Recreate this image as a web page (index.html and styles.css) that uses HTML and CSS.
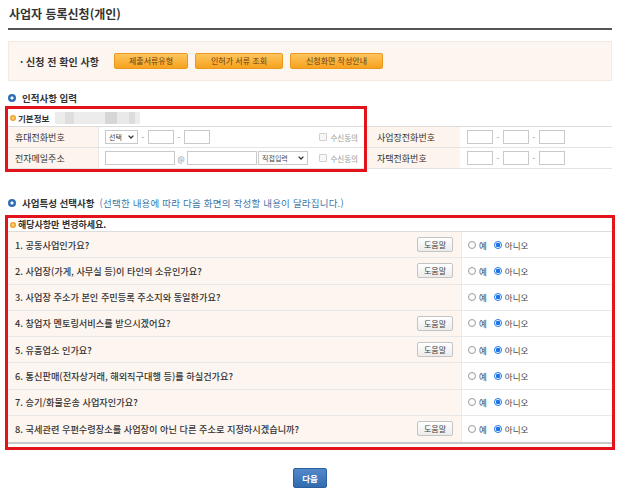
FILE: index.html
```html
<!DOCTYPE html>
<html lang="ko">
<head>
<meta charset="utf-8">
<title>사업자 등록신청(개인)</title>
<link rel="stylesheet" href="styles.css">
</head>
<body>
<div class="page">
  <h1 class="title">사업자 등록신청(개인)</h1>

  <div class="notice">
    <span class="notice-label">· 신청 전 확인 사항</span>
    <button class="btn-orange w1">제출서류유형</button>
    <button class="btn-orange w2">인허가 서류 조회</button>
    <button class="btn-orange w3">신청화면 작성안내</button>
  </div>

  <h2 class="sec-head"><span class="bullet"></span>인적사항 입력</h2>

  <div class="basic">
    <div class="sub-head"><span class="dot"></span>기본정보<span class="redact"></span></div>
    <div class="info-grid">
      <div class="lbl">휴대전화번호</div>
      <div class="fld">
        <div class="sel s-sm"><span>선택</span><svg width="6" height="4" viewBox="0 0 6 4"><path d="M0.6 0.6 L3 3 L5.4 0.6" fill="none" stroke="#333" stroke-width="1.3"/></svg></div>
        <span class="dash">-</span><input class="tx" type="text"><span class="dash">-</span><input class="tx" type="text">
        <span class="agree"><span class="cb"></span>수신동의</span>
      </div>
      <div class="lbl lbl-r">사업장전화번호</div>
      <div class="fld fld-r">
        <input class="tx" type="text"><span class="dash">-</span><input class="tx" type="text"><span class="dash">-</span><input class="tx" type="text">
      </div>

      <div class="lbl">전자메일주소</div>
      <div class="fld">
        <input class="tx tx-wide" type="text"><span class="at">@</span><input class="tx tx-wide" type="text">
        <div class="sel s-lg"><span>직접입력</span><svg width="6" height="4" viewBox="0 0 6 4"><path d="M0.6 0.6 L3 3 L5.4 0.6" fill="none" stroke="#333" stroke-width="1.3"/></svg></div>
        <span class="agree"><span class="cb"></span>수신동의</span>
      </div>
      <div class="lbl lbl-r">자택전화번호</div>
      <div class="fld fld-r">
        <input class="tx" type="text"><span class="dash">-</span><input class="tx" type="text"><span class="dash">-</span><input class="tx" type="text">
      </div>
    </div>
    <div class="mark"></div>
  </div>

  <h2 class="sec-head sec-2"><span class="bullet"></span>사업특성 선택사항<span class="note">(선택한 내용에 따라 다음 화면의 작성할 내용이 달라집니다.)</span></h2>

  <div class="qbox">
    <div class="sub-head sub-q"><span class="dot"></span>해당사항만 변경하세요.</div>
    <div class="qtable">
      <div class="qrow">
        <div class="qcell"><span>1. 공동사업인가요?</span><button class="help">도움말</button></div>
        <div class="acell"><label class="opt"><input type="radio" name="q1">예</label><label class="opt"><input type="radio" name="q1" checked>아니오</label></div>
      </div>
      <div class="qrow">
        <div class="qcell"><span>2. 사업장(가게, 사무실 등)이 타인의 소유인가요?</span><button class="help">도움말</button></div>
        <div class="acell"><label class="opt"><input type="radio" name="q2">예</label><label class="opt"><input type="radio" name="q2" checked>아니오</label></div>
      </div>
      <div class="qrow">
        <div class="qcell"><span>3. 사업장 주소가 본인 주민등록 주소지와 동일한가요?</span></div>
        <div class="acell"><label class="opt"><input type="radio" name="q3">예</label><label class="opt"><input type="radio" name="q3" checked>아니오</label></div>
      </div>
      <div class="qrow">
        <div class="qcell"><span>4. 창업자 멘토링서비스를 받으시겠어요?</span><button class="help">도움말</button></div>
        <div class="acell"><label class="opt"><input type="radio" name="q4">예</label><label class="opt"><input type="radio" name="q4" checked>아니오</label></div>
      </div>
      <div class="qrow">
        <div class="qcell"><span>5. 유흥업소 인가요?</span><button class="help">도움말</button></div>
        <div class="acell"><label class="opt"><input type="radio" name="q5">예</label><label class="opt"><input type="radio" name="q5" checked>아니오</label></div>
      </div>
      <div class="qrow">
        <div class="qcell"><span>6. 통신판매(전자상거래, 해외직구대행 등)를 하실건가요?</span></div>
        <div class="acell"><label class="opt"><input type="radio" name="q6">예</label><label class="opt"><input type="radio" name="q6" checked>아니오</label></div>
      </div>
      <div class="qrow">
        <div class="qcell"><span>7. 승기/화물운송 사업자인가요?</span></div>
        <div class="acell"><label class="opt"><input type="radio" name="q7">예</label><label class="opt"><input type="radio" name="q7" checked>아니오</label></div>
      </div>
      <div class="qrow">
        <div class="qcell"><span>8. 국세관련 우편수령장소를 사업장이 아닌 다른 주소로 지정하시겠습니까?</span><button class="help">도움말</button></div>
        <div class="acell"><label class="opt"><input type="radio" name="q8">예</label><label class="opt"><input type="radio" name="q8" checked>아니오</label></div>
      </div>
    </div>
  </div>

  <div class="actions"><button class="btn-next">다음</button></div>
</div>
</body>
</html>
```

FILE: styles.css
```css
* { box-sizing: border-box; }

body {
  margin: 0;
  background: #fff;
  font-family: "Noto Sans CJK KR", "Noto Sans", sans-serif;
  color: #333;
}

.page {
  width: 622px;
  padding: 0 10px 0 8px;
}

.title {
  margin: 0;
  padding: 6px 0 6px 1px;
  font-size: 12px;
  line-height: 16px;
  font-weight: 700;
  color: #333;
  border-bottom: 2px solid #555;
}

.notice {
  margin-top: 11px;
  height: 40px;
  background: #fdf6f0;
  border: 1px solid #f3e9df;
  display: flex;
  align-items: center;
  padding-left: 11px;
}

.notice-label {
  flex: none;
  width: 94px;
  font-size: 10px;
  font-weight: 700;
  color: #333;
}

.btn-orange {
  flex: none;
  height: 16px;
  padding: 0;
  margin-right: 7px;
  font-family: inherit;
  font-size: 8px;
  line-height: 14px;
  color: #6a3c12;
  border: 1px solid #ea981f;
  border-radius: 2px;
  background: linear-gradient(#fdc55e, #f7a21d);
}
.w1 { width: 74px; }
.w2 { width: 88px; }
.w3 { width: 93px; }

.sec-head {
  margin: 10px 0 0;
  display: flex;
  align-items: center;
  font-size: 9.5px;
  line-height: 14px;
  font-weight: 700;
  color: #333;
}
.sec-2 { margin-top: 27px; }

.bullet {
  flex: none;
  width: 8px;
  height: 8px;
  margin-right: 6px;
  border-radius: 50%;
  background: radial-gradient(circle, #fff 0 1.3px, #2f6eb5 1.8px);
}

.note {
  margin-left: 5px;
  font-weight: 400;
  color: #3a76a6;
  letter-spacing: 0.2px;
}

.basic {
  position: relative;
  margin-top: 4px;
}

.sub-head {
  height: 17px;
  display: flex;
  align-items: center;
  padding-left: 2px;
  font-size: 8.5px;
  font-weight: 700;
  color: #333;
}

.dot {
  flex: none;
  width: 6px;
  height: 6px;
  margin-right: 2px;
  border-radius: 50%;
  background: radial-gradient(circle, #fbd07d 0 1px, #f0a02a 2px);
}

.redact {
  width: 85px;
  height: 12px;
  margin-left: 6px;
  background: linear-gradient(90deg,
    #ececec 0 10px, #dedede 10px 19px, #ececec 19px 50px,
    #d6d6d6 50px 62px, #e9e9e9 62px 74px, #dcdcdc 74px 80px, #ececec 80px);
}

.info-grid {
  display: grid;
  grid-template-columns: 90px 269px 93px 1fr;
  border-top: 1px solid #dcdcdc;
}

.lbl, .fld {
  height: 21px;
  display: flex;
  align-items: center;
  border-bottom: 1px solid #e3e3e3;
}

.lbl {
  background: #fcf4ed;
  padding-left: 7px;
  font-size: 9px;
  color: #333;
}
.lbl-r { padding-left: 10px; }

.fld {
  padding-left: 6px;
  border-left: 1px solid #e8e8e8;
}
.fld-r {
  padding-left: 7px;
  border-left: none;
}

.tx {
  width: 26px;
  height: 14px;
  padding: 0;
  border: 1px solid #c9c9c9;
  background: #fff;
  flex: none;
}
.tx-wide { width: 70px; }

.dash {
  flex: none;
  width: 10px;
  text-align: center;
  font-size: 8px;
  color: #888;
}

.at {
  flex: none;
  width: 12px;
  text-align: center;
  font-size: 7.5px;
  color: #888;
}

.sel {
  flex: none;
  height: 14px;
  border: 1px solid #c9c9c9;
  background: #fff;
  display: flex;
  align-items: center;
  justify-content: space-between;
  padding: 0 3px 0 3px;
  font-size: 7px;
  color: #444;
}
.s-sm { width: 33px; }
.s-lg { width: 50px; margin-left: 1px; }

.agree {
  margin-left: auto;
  padding-right: 9px;
  display: flex;
  align-items: center;
  font-size: 7.5px;
  color: #999;
}

.cb {
  width: 8px;
  height: 8px;
  margin-right: 3px;
  border: 1px solid #d0d0d0;
  border-radius: 1px;
  background: #f7f7f7;
}

.mark {
  position: absolute;
  top: -3px;
  left: -3px;
  width: 362px;
  height: 66px;
  border: 3px solid #e3131b;
  pointer-events: none;
}

.qbox {
  margin: 5px -3px 0;
  border: 3px solid #e3131b;
  padding-bottom: 3px;
}

.sub-q {
  height: 13px;
  font-size: 9px;
}

.qtable {
  border-top: 1px solid #dcdcdc;
  border-bottom: 2px solid #c8c8c8;
}

.qrow {
  display: grid;
  grid-template-columns: 453px 1fr;
  height: 26.25px;
  border-bottom: 1px solid #e8e8e8;
}
.qrow:last-child { border-bottom: none; }

.qcell {
  background: #fdf5ef;
  padding: 0 8px 0 7px;
  display: flex;
  align-items: center;
  justify-content: space-between;
  font-size: 9.2px;
  font-weight: 500;
  color: #333;
}

.help {
  flex: none;
  width: 36px;
  height: 15px;
  padding: 0;
  font-family: inherit;
  font-size: 8px;
  line-height: 13px;
  color: #444;
  border: 1px solid #c4c4c4;
  border-radius: 2px;
  background: linear-gradient(#fff, #ececec);
}

.acell {
  border-left: 1px solid #ebebeb;
  padding-left: 6px;
  display: flex;
  align-items: center;
  font-size: 8.5px;
  color: #444;
}

.opt {
  display: flex;
  align-items: center;
  margin-right: 7px;
}

.opt input {
  appearance: none;
  -webkit-appearance: none;
  width: 8px;
  height: 8px;
  margin: 0 3px 0 0;
  border: 1px solid #9a9a9a;
  border-radius: 50%;
  background: #fff;
}
.opt input:checked {
  border-color: #1a73e8;
  background: radial-gradient(circle, #1a73e8 0 2px, #fff 2.5px);
}

.actions {
  display: flex;
  justify-content: center;
  margin-top: 18px;
}

.btn-next {
  width: 34px;
  height: 20px;
  padding: 0;
  font-family: inherit;
  font-size: 8.5px;
  font-weight: 700;
  color: #fff;
  border: 1px solid #2c5f9e;
  border-radius: 2px;
  background: linear-gradient(#5189cb, #336bb0);
}
```
